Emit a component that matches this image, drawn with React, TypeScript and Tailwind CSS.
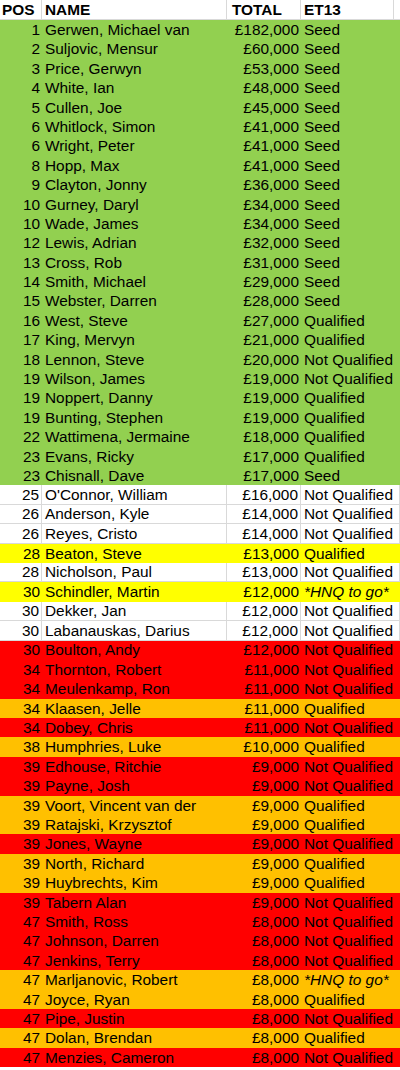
import React from 'react';

type Fill = 'green' | 'white' | 'yellow' | 'red' | 'orange';

interface Player {
  pos: number;
  name: string;
  total: string;
  status: string;
  fill: Fill;
}

const rows: Player[] = [
  { pos: 1, name: 'Gerwen, Michael van', total: '£182,000', status: 'Seed', fill: 'green' },
  { pos: 2, name: 'Suljovic, Mensur', total: '£60,000', status: 'Seed', fill: 'green' },
  { pos: 3, name: 'Price, Gerwyn', total: '£53,000', status: 'Seed', fill: 'green' },
  { pos: 4, name: 'White, Ian', total: '£48,000', status: 'Seed', fill: 'green' },
  { pos: 5, name: 'Cullen, Joe', total: '£45,000', status: 'Seed', fill: 'green' },
  { pos: 6, name: 'Whitlock, Simon', total: '£41,000', status: 'Seed', fill: 'green' },
  { pos: 6, name: 'Wright, Peter', total: '£41,000', status: 'Seed', fill: 'green' },
  { pos: 8, name: 'Hopp, Max', total: '£41,000', status: 'Seed', fill: 'green' },
  { pos: 9, name: 'Clayton, Jonny', total: '£36,000', status: 'Seed', fill: 'green' },
  { pos: 10, name: 'Gurney, Daryl', total: '£34,000', status: 'Seed', fill: 'green' },
  { pos: 10, name: 'Wade, James', total: '£34,000', status: 'Seed', fill: 'green' },
  { pos: 12, name: 'Lewis, Adrian', total: '£32,000', status: 'Seed', fill: 'green' },
  { pos: 13, name: 'Cross, Rob', total: '£31,000', status: 'Seed', fill: 'green' },
  { pos: 14, name: 'Smith, Michael', total: '£29,000', status: 'Seed', fill: 'green' },
  { pos: 15, name: 'Webster, Darren', total: '£28,000', status: 'Seed', fill: 'green' },
  { pos: 16, name: 'West, Steve', total: '£27,000', status: 'Qualified', fill: 'green' },
  { pos: 17, name: 'King, Mervyn', total: '£21,000', status: 'Qualified', fill: 'green' },
  { pos: 18, name: 'Lennon, Steve', total: '£20,000', status: 'Not Qualified', fill: 'green' },
  { pos: 19, name: 'Wilson, James', total: '£19,000', status: 'Not Qualified', fill: 'green' },
  { pos: 19, name: 'Noppert, Danny', total: '£19,000', status: 'Qualified', fill: 'green' },
  { pos: 19, name: 'Bunting, Stephen', total: '£19,000', status: 'Qualified', fill: 'green' },
  { pos: 22, name: 'Wattimena, Jermaine', total: '£18,000', status: 'Qualified', fill: 'green' },
  { pos: 23, name: 'Evans, Ricky', total: '£17,000', status: 'Qualified', fill: 'green' },
  { pos: 23, name: 'Chisnall, Dave', total: '£17,000', status: 'Seed', fill: 'green' },
  { pos: 25, name: "O'Connor, William", total: '£16,000', status: 'Not Qualified', fill: 'white' },
  { pos: 26, name: 'Anderson, Kyle', total: '£14,000', status: 'Not Qualified', fill: 'white' },
  { pos: 26, name: 'Reyes, Cristo', total: '£14,000', status: 'Not Qualified', fill: 'white' },
  { pos: 28, name: 'Beaton, Steve', total: '£13,000', status: 'Qualified', fill: 'yellow' },
  { pos: 28, name: 'Nicholson, Paul', total: '£13,000', status: 'Not Qualified', fill: 'white' },
  { pos: 30, name: 'Schindler, Martin', total: '£12,000', status: '*HNQ to go*', fill: 'yellow' },
  { pos: 30, name: 'Dekker, Jan', total: '£12,000', status: 'Not Qualified', fill: 'white' },
  { pos: 30, name: 'Labanauskas, Darius', total: '£12,000', status: 'Not Qualified', fill: 'white' },
  { pos: 30, name: 'Boulton, Andy', total: '£12,000', status: 'Not Qualified', fill: 'red' },
  { pos: 34, name: 'Thornton, Robert', total: '£11,000', status: 'Not Qualified', fill: 'red' },
  { pos: 34, name: 'Meulenkamp, Ron', total: '£11,000', status: 'Not Qualified', fill: 'red' },
  { pos: 34, name: 'Klaasen, Jelle', total: '£11,000', status: 'Qualified', fill: 'orange' },
  { pos: 34, name: 'Dobey, Chris', total: '£11,000', status: 'Not Qualified', fill: 'red' },
  { pos: 38, name: 'Humphries, Luke', total: '£10,000', status: 'Qualified', fill: 'orange' },
  { pos: 39, name: 'Edhouse, Ritchie', total: '£9,000', status: 'Not Qualified', fill: 'red' },
  { pos: 39, name: 'Payne, Josh', total: '£9,000', status: 'Not Qualified', fill: 'red' },
  { pos: 39, name: 'Voort, Vincent van der', total: '£9,000', status: 'Qualified', fill: 'orange' },
  { pos: 39, name: 'Ratajski, Krzysztof', total: '£9,000', status: 'Qualified', fill: 'orange' },
  { pos: 39, name: 'Jones, Wayne', total: '£9,000', status: 'Not Qualified', fill: 'red' },
  { pos: 39, name: 'North, Richard', total: '£9,000', status: 'Qualified', fill: 'orange' },
  { pos: 39, name: 'Huybrechts, Kim', total: '£9,000', status: 'Qualified', fill: 'orange' },
  { pos: 39, name: 'Tabern Alan', total: '£9,000', status: 'Not Qualified', fill: 'red' },
  { pos: 47, name: 'Smith, Ross', total: '£8,000', status: 'Not Qualified', fill: 'red' },
  { pos: 47, name: 'Johnson, Darren', total: '£8,000', status: 'Not Qualified', fill: 'red' },
  { pos: 47, name: 'Jenkins, Terry', total: '£8,000', status: 'Not Qualified', fill: 'red' },
  { pos: 47, name: 'Marljanovic, Robert', total: '£8,000', status: '*HNQ to go*', fill: 'orange' },
  { pos: 47, name: 'Joyce, Ryan', total: '£8,000', status: 'Qualified', fill: 'orange' },
  { pos: 47, name: 'Pipe, Justin', total: '£8,000', status: 'Not Qualified', fill: 'red' },
  { pos: 47, name: 'Dolan, Brendan', total: '£8,000', status: 'Qualified', fill: 'orange' },
  { pos: 47, name: 'Menzies, Cameron', total: '£8,000', status: 'Not Qualified', fill: 'red' },
];

const fillClass: Record<Fill, string> = {
  green: 'bg-[#92d050]',
  white: 'bg-white',
  yellow: 'bg-[#ffff00]',
  red: 'bg-[#ff0000]',
  orange: 'bg-[#ffc000]',
};

// white rows keep the sheet gridlines, filled rows hide them
const cellLine = (fill: Fill) => (fill === 'white' ? 'border-r border-b border-[#d9d9d9]' : '');

const Row: React.FC<{ p: Player }> = ({ p }) => {
  const line = cellLine(p.fill);
  return (
    <div className={`flex h-[19.4px] items-center leading-none ${fillClass[p.fill]}`}>
      <div className={`h-full w-[42px] flex items-center justify-end pr-[2px] ${line}`}>{p.pos}</div>
      <div className={`h-full w-[185px] flex items-center pl-[3px] whitespace-nowrap ${line}`}>{p.name}</div>
      <div className={`h-full w-[74px] flex items-center justify-end pr-[2px] ${line}`}>{p.total}</div>
      <div
        className={`h-full flex-1 flex items-center pl-[3px] whitespace-nowrap ${line} ${
          p.status.startsWith('*') ? 'italic' : ''
        }`}
      >
        {p.status}
      </div>
    </div>
  );
};

export default function App() {
  return (
    <div className="w-[400px] bg-white text-black text-[15.4px] font-['Liberation_Sans',Arial,sans-serif]">
      <div className="flex h-[20px] items-center font-bold leading-none bg-white">
        <div className="h-full w-[42px] flex items-center pl-[2px] border-r border-b border-[#d9d9d9]">POS</div>
        <div className="h-full w-[185px] flex items-center pl-[3px] border-r border-b border-[#d9d9d9]">NAME</div>
        <div className="h-full w-[74px] flex items-center pl-[5px] border-r border-b border-[#d9d9d9]">TOTAL</div>
        <div className="h-full w-[93px] flex items-center pl-[3px] border-r border-b border-[#d9d9d9]">ET13</div>
        <div className="h-full flex-1 border-b border-[#d9d9d9]"></div>
      </div>
      {rows.map((p, i) => (
        <Row key={i} p={p} />
      ))}
    </div>
  );
}
